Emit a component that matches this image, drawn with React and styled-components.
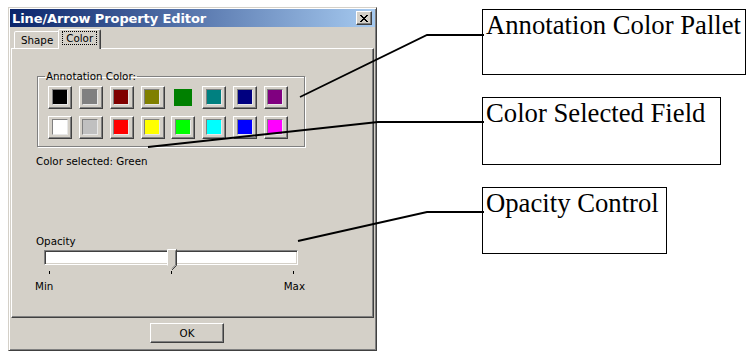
import React from 'react';
import styled, {createGlobalStyle} from 'styled-components';

const GlobalStyle = createGlobalStyle`
  html, body {
    margin: 0;
    padding: 0;
    background: #ffffff;
  }
  body {
    font-family: 'DejaVu Sans', 'Liberation Sans', sans-serif;
  }
`;

const FACE = '#D4D0C8';

const Page = styled.div`
  position: relative;
  width: 747px;
  height: 352px;
  display: flex;
  align-items: flex-start;
  overflow: hidden;
`;

const Window = styled.div`
  box-sizing: border-box;
  margin: 7px 0 0 8px;
  width: 369px;
  height: 344px;
  background: ${FACE};
  border: 1px solid;
  border-color: ${FACE} #404040 #404040 ${FACE};
  box-shadow: inset 1px 1px 0 #ffffff, inset -1px -1px 0 #808080;
  padding: 1px;
  display: flex;
  flex-direction: column;
`;

const TitleBar = styled.div`
  height: 18px;
  display: flex;
  align-items: center;
  justify-content: space-between;
  padding: 0 3px 0 2px;
  background: linear-gradient(to right, #0A246A, #A6CAF0);
`;

const TitleText = styled.span`
  color: #ffffff;
  font-weight: bold;
  font-size: 13px;
  letter-spacing: -0.1px;
`;

const CloseButton = styled.div`
  box-sizing: border-box;
  width: 16px;
  height: 14px;
  background: ${FACE};
  border: 1px solid;
  border-color: #ffffff #404040 #404040 #ffffff;
  box-shadow: inset -1px -1px 0 #808080;
  display: flex;
  align-items: center;
  justify-content: center;
`;

const Body = styled.div`
  flex: 1;
  display: flex;
  flex-direction: column;
  padding: 0 1px;
  font-size: 10.3px;
  color: #000;
`;

const TabStrip = styled.div`
  height: 21px;
  display: flex;
  align-items: flex-end;
  padding-left: 3px;
  position: relative;
  z-index: 1;
`;

const Tab = styled.div`
  box-sizing: border-box;
  height: ${p => (p.$active ? '20px' : '17px')};
  margin: ${p => (p.$active ? '0 -2px -1px -2px' : '0')};
  padding: ${p => (p.$active ? '2px 4px 0' : '2px 6px 0')};
  background: ${FACE};
  border: 1px solid;
  border-bottom: none;
  border-color: #ffffff #404040 transparent #ffffff;
  border-radius: 2px 2px 0 0;
  box-shadow: inset -1px 0 0 #808080;
  line-height: 12px;
  white-space: nowrap;
`;

const FocusLabel = styled.span`
  display: inline-block;
  padding: 0 3px;
  outline: 1px dotted #000;
  outline-offset: 0;
  line-height: 12px;
`;

const TabPanel = styled.div`
  box-sizing: border-box;
  height: 270px;
  border: 1px solid;
  border-color: #ffffff #404040 #404040 #ffffff;
  box-shadow: inset -1px -1px 0 #808080;
  padding: 21px 0 0 24px;
  display: flex;
  flex-direction: column;
  align-items: flex-start;
`;

const GroupBox = styled.fieldset`
  box-sizing: border-box;
  margin: 0 0 0 1px;
  width: 268px;
  height: 77px;
  padding: 4px 0 0 10px;
  border: 1px solid #808080;
  box-shadow: inset 1px 1px 0 #ffffff, 1px 1px 0 #ffffff;
`;

const Legend = styled.legend`
  padding: 0 1px;
  margin-left: -3px;
  line-height: 12px;
`;

const SwatchGrid = styled.div`
  display: grid;
  grid-template-columns: repeat(8, 24px);
  grid-auto-rows: 23px;
  column-gap: 6.85px;
  row-gap: 7px;
`;

const SwatchButton = styled.div`
  box-sizing: border-box;
  width: 24px;
  height: 23px;
  display: flex;
  align-items: center;
  justify-content: center;
  background: ${FACE};
  border: 1px solid;
  border-color: ${p => (p.$selected ? FACE : '#ffffff #404040 #404040 #ffffff')};
  box-shadow: ${p => (p.$selected ? 'none' : 'inset -1px -1px 0 #808080')};
`;

const Chip = styled.div`
  box-sizing: border-box;
  width: ${p => (p.$selected ? '18px' : '16px')};
  height: ${p => (p.$selected ? '17px' : '16px')};
  background: ${p => p.$color};
  border: ${p => (p.$selected ? 'none' : '1px solid #808080')};
  border-right-color: #e8e8e8;
  border-bottom-color: #e8e8e8;
  margin: ${p => (p.$selected ? '0' : '0 1px 1px 0')};
`;

const Label = styled.div`
  line-height: 12px;
  margin-top: ${p => p.$top || 0}px;
  margin-left: ${p => p.$left || 0}px;
`;

const SliderBox = styled.div`
  width: 270px;
  margin-top: 3px;
  margin-left: -1px;
  display: flex;
  flex-direction: column;
`;

const Track = styled.div`
  position: relative;
  box-sizing: border-box;
  margin-left: 9px;
  width: 254px;
  height: 15px;
  background: #ffffff;
  border: 1px solid;
  border-color: #808080 #ffffff #ffffff #808080;
  box-shadow: inset 1px 1px 0 #404040, inset -1px -1px 0 ${FACE};
`;

const Thumb = styled.svg`
  position: absolute;
  top: -2px;
  display: block;
`;

const TickRow = styled.div`
  margin: 6px 0 0 14px;
  width: 245px;
  height: 3px;
  display: flex;
  justify-content: space-between;
`;

const Tick = styled.div`
  width: 1px;
  height: 3px;
  background: #000;
`;

const Scale = styled.div`
  display: flex;
  justify-content: space-between;
  line-height: 12px;
  margin-top: 6px;
`;

const Footer = styled.div`
  flex: 1;
  display: flex;
  align-items: flex-start;
  padding: 5px 0 0 139px;
`;

const PushButton = styled.div`
  box-sizing: border-box;
  width: 74px;
  height: 20px;
  background: ${FACE};
  border: 1px solid;
  border-color: #ffffff #404040 #404040 #ffffff;
  box-shadow: inset -1px -1px 0 #808080;
  display: flex;
  align-items: center;
  justify-content: center;
`;

const Callouts = styled.div`
  margin-left: 105px;
  padding-top: 9px;
  display: flex;
  flex-direction: column;
  gap: 22px;
`;

const CalloutBox = styled.div`
  box-sizing: border-box;
  width: ${p => p.$width}px;
  height: ${p => p.$height}px;
  border: 1.6px solid #000;
  padding: 2px 0 0 3px;
  font-family: 'Liberation Serif', 'Times New Roman', serif;
  font-size: 26.7px;
  line-height: 26px;
  color: #000;
  white-space: nowrap;
`;

const Leaders = styled.svg`
  position: absolute;
  left: 0;
  top: 0;
  pointer-events: none;
`;

const row1 = ['#000000', '#808080', '#800000', '#808000', '#008000', '#008080', '#000080', '#800080'];
const row2 = ['#FFFFFF', '#C0C0C0', '#FF0000', '#FFFF00', '#00FF00', '#00FFFF', '#0000FF', '#FF00FF'];

function ColorSwatch({color, selected}) {
  return (
    <SwatchButton $selected={selected}>
      <Chip $color={color} $selected={selected} />
    </SwatchButton>
  );
}

function OpacitySlider({value}) {
  const left = 5 + value * 244 - 5;
  return (
    <SliderBox>
      <Track>
        <Thumb width="10" height="22" viewBox="0 0 10 22" style={{left: left}}>
          <path d="M0.5 0.5 H9.5 V16.5 L5 21 L0.5 16.5 Z" fill="#D4D0C8" />
          <path d="M0.5 16.5 V0.5 H9" stroke="#ffffff" fill="none" />
          <path d="M9.5 0.5 V16.5 L5 21" stroke="#404040" fill="none" />
          <path d="M8.5 1.5 V16 L5 19.5" stroke="#808080" fill="none" />
        </Thumb>
      </Track>
      <TickRow>
        <Tick />
        <Tick />
        <Tick />
      </TickRow>
      <Scale>
        <span>Min</span>
        <span>Max</span>
      </Scale>
    </SliderBox>
  );
}

export default function App() {
  return (
    <Page>
      <GlobalStyle />
      <Window>
        <TitleBar>
          <TitleText>Line/Arrow Property Editor</TitleText>
          <CloseButton>
            <svg width="8" height="7" viewBox="0 0 8 7">
              <path d="M0 0 L7 7 M1 0 L8 7 M7 0 L0 7 M8 0 L1 7" stroke="#000" strokeWidth="1" />
            </svg>
          </CloseButton>
        </TitleBar>
        <Body>
          <TabStrip>
            <Tab>Shape</Tab>
            <Tab $active>
              <FocusLabel>Color</FocusLabel>
            </Tab>
          </TabStrip>
          <TabPanel>
            <GroupBox>
              <Legend>Annotation Color:</Legend>
              <SwatchGrid>
                {row1.map(c => (
                  <ColorSwatch key={c} color={c} selected={c === '#008000'} />
                ))}
                {row2.map(c => (
                  <ColorSwatch key={c} color={c} />
                ))}
              </SwatchGrid>
            </GroupBox>
            <Label $top={8}>Color selected: Green</Label>
            <Label $top={68}>Opacity</Label>
            <OpacitySlider value={0.5} />
          </TabPanel>
          <Footer>
            <PushButton>OK</PushButton>
          </Footer>
        </Body>
      </Window>
      <Callouts>
        <CalloutBox $width={264} $height={66}>Annotation Color Pallet</CalloutBox>
        <CalloutBox $width={239} $height={68}>Color Selected Field</CalloutBox>
        <CalloutBox $width={185} $height={67}>Opacity Control</CalloutBox>
      </Callouts>
      <Leaders width="747" height="352" viewBox="0 0 747 352">
        <polyline points="300,97 427,35 484,35" fill="none" stroke="#000" strokeWidth="1.8" />
        <polyline points="148,147 378,122 484,122" fill="none" stroke="#000" strokeWidth="1.8" />
        <polyline points="298,241 427,212 484,212" fill="none" stroke="#000" strokeWidth="1.8" />
      </Leaders>
    </Page>
  );
}
